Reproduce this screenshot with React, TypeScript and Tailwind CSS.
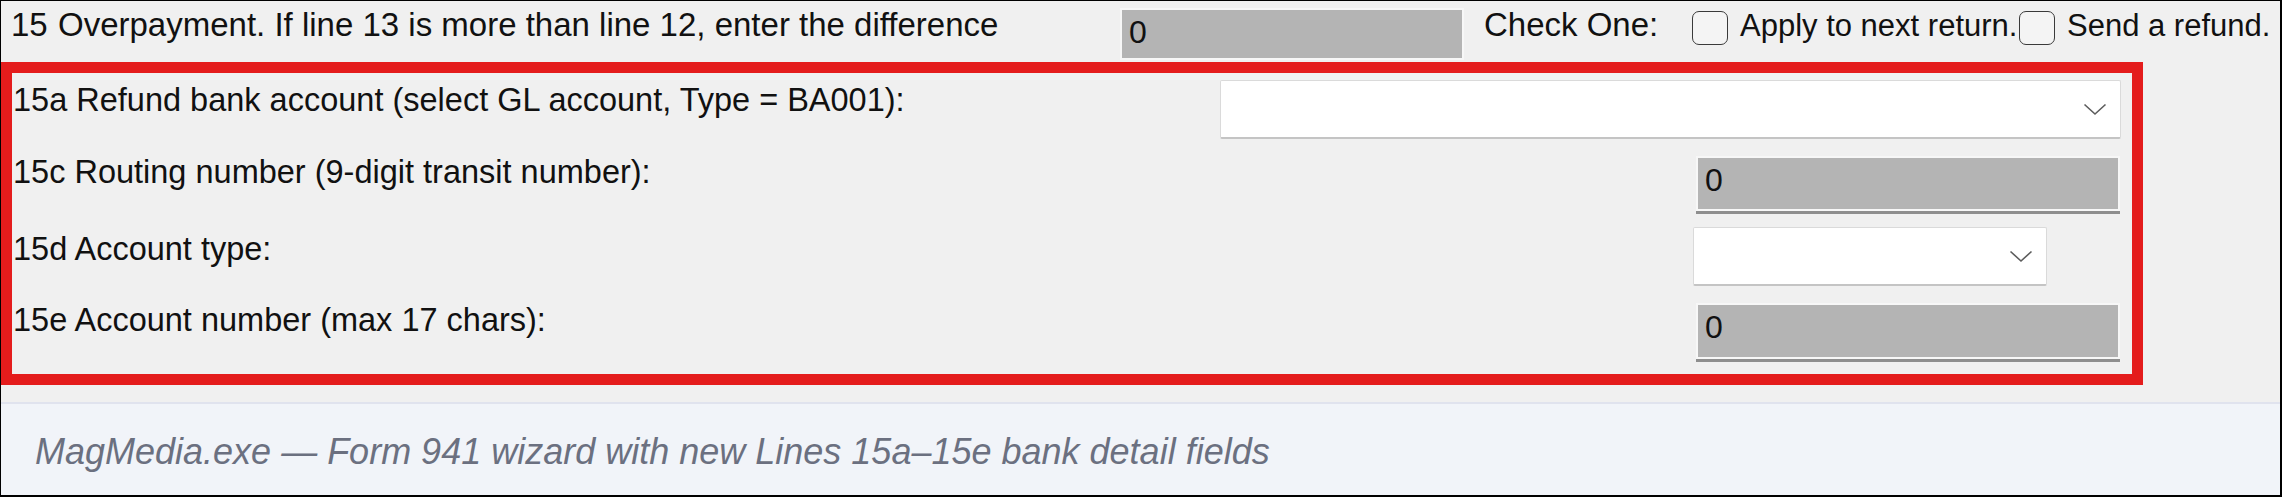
import { ReactNode } from 'react';

function Chevron() {
  return (
    <svg width="24" height="13" viewBox="0 0 24 13" fill="none">
      <polyline points="1.5,1.5 12,11 22.5,1.5" stroke="#5c5c5c" strokeWidth="1.6" />
    </svg>
  );
}

function GrayInput({ className = '' }: { className?: string }) {
  return (
    <div className={`border-b-[3px] border-[#8e8e8e] ${className}`}>
      <div className="h-full border-2 border-[#f7f7f7] bg-[#b4b4b4] pl-[7px] pt-[2px] text-[32px] leading-[40px] text-[#111]">0</div>
    </div>
  );
}

function Dropdown({ className = '' }: { className?: string }) {
  return (
    <div
      className={`flex items-center justify-end rounded-[2px] border border-[#dadada] border-b-[#c4c4c4] border-b-2 bg-white pr-[13px] ${className}`}
    >
      <Chevron />
    </div>
  );
}

function Checkbox() {
  return <div className="mt-[10px] h-[34px] w-[36px] shrink-0 rounded-[7px] border-[1.5px] border-[#3a3a3a] bg-[#f4f4f4]" />;
}

function Row({ label, labelTop, height, children }: { label: ReactNode; labelTop: string; height: string; children: ReactNode }) {
  return (
    <div className={`flex items-start ${height}`}>
      <div className={`flex-1 pl-[1px] text-[32.5px] leading-[36px] text-[#111] ${labelTop}`}>{label}</div>
      {children}
    </div>
  );
}

export default function App() {
  return (
    <div className="h-[497px] w-[2282px] overflow-hidden border-t border-l border-r-2 border-b-2 border-black bg-[#f0f0f0] font-['Liberation_Sans',Arial,sans-serif]">
      {/* Line 15 */}
      <div className="flex h-[61px] items-start text-[33px] leading-[36px] text-[#111]">
        <div className="mt-[6px] w-[1119px] shrink-0 pl-[10px]">
          <span className="inline-block w-[47px]">15</span>
          Overpayment. If line 13 is more than line 12, enter the difference
        </div>
        <GrayInput className="mt-[7px] h-[52px] w-[344px] shrink-0 !border-b-0" />
        <div className="ml-[20px] mt-[6px] w-[208px] shrink-0">Check One:</div>
        <Checkbox />
        <div className="ml-[12px] mt-[7px] w-[279px] shrink-0 text-[31px]">Apply to next return.</div>
        <Checkbox />
        <div className="ml-[12px] mt-[7px] shrink-0 text-[31px]">Send a refund.</div>
      </div>

      {/* Lines 15a-15e, highlighted */}
      <div className="h-[323px] w-[2142px] border-[11px] border-[#e41c1c]">
        <Row label="15a Refund bank account (select GL account, Type = BA001):" labelTop="mt-[9px]" height="h-[77px]">
          <Dropdown className="mr-[11px] mt-[7px] h-[59px] w-[901px]" />
        </Row>
        <Row label="15c Routing number (9-digit transit number):" labelTop="mt-[4px]" height="h-[73px]">
          <GrayInput className="mr-[12px] mt-[6px] h-[58px] w-[424px]" />
        </Row>
        <Row label="15d Account type:" labelTop="mt-[8px]" height="h-[75px]">
          <Dropdown className="mr-[85px] mt-[4px] h-[59px] w-[354px]" />
        </Row>
        <Row label="15e Account number (max 17 chars):" labelTop="mt-[4px]" height="h-[76px]">
          <GrayInput className="mr-[12px] mt-[5px] h-[59px] w-[424px]" />
        </Row>
      </div>

      <div className="mt-[17px] flex h-[93px] items-center border-t-2 border-[#e0e3ee] bg-[#f1f4f9] pl-[34px] pt-[4px]">
        <span className="text-[36px] italic text-[#6b7080]">
          MagMedia.exe — Form 941 wizard with new Lines 15a–15e bank detail fields
        </span>
      </div>
    </div>
  );
}
